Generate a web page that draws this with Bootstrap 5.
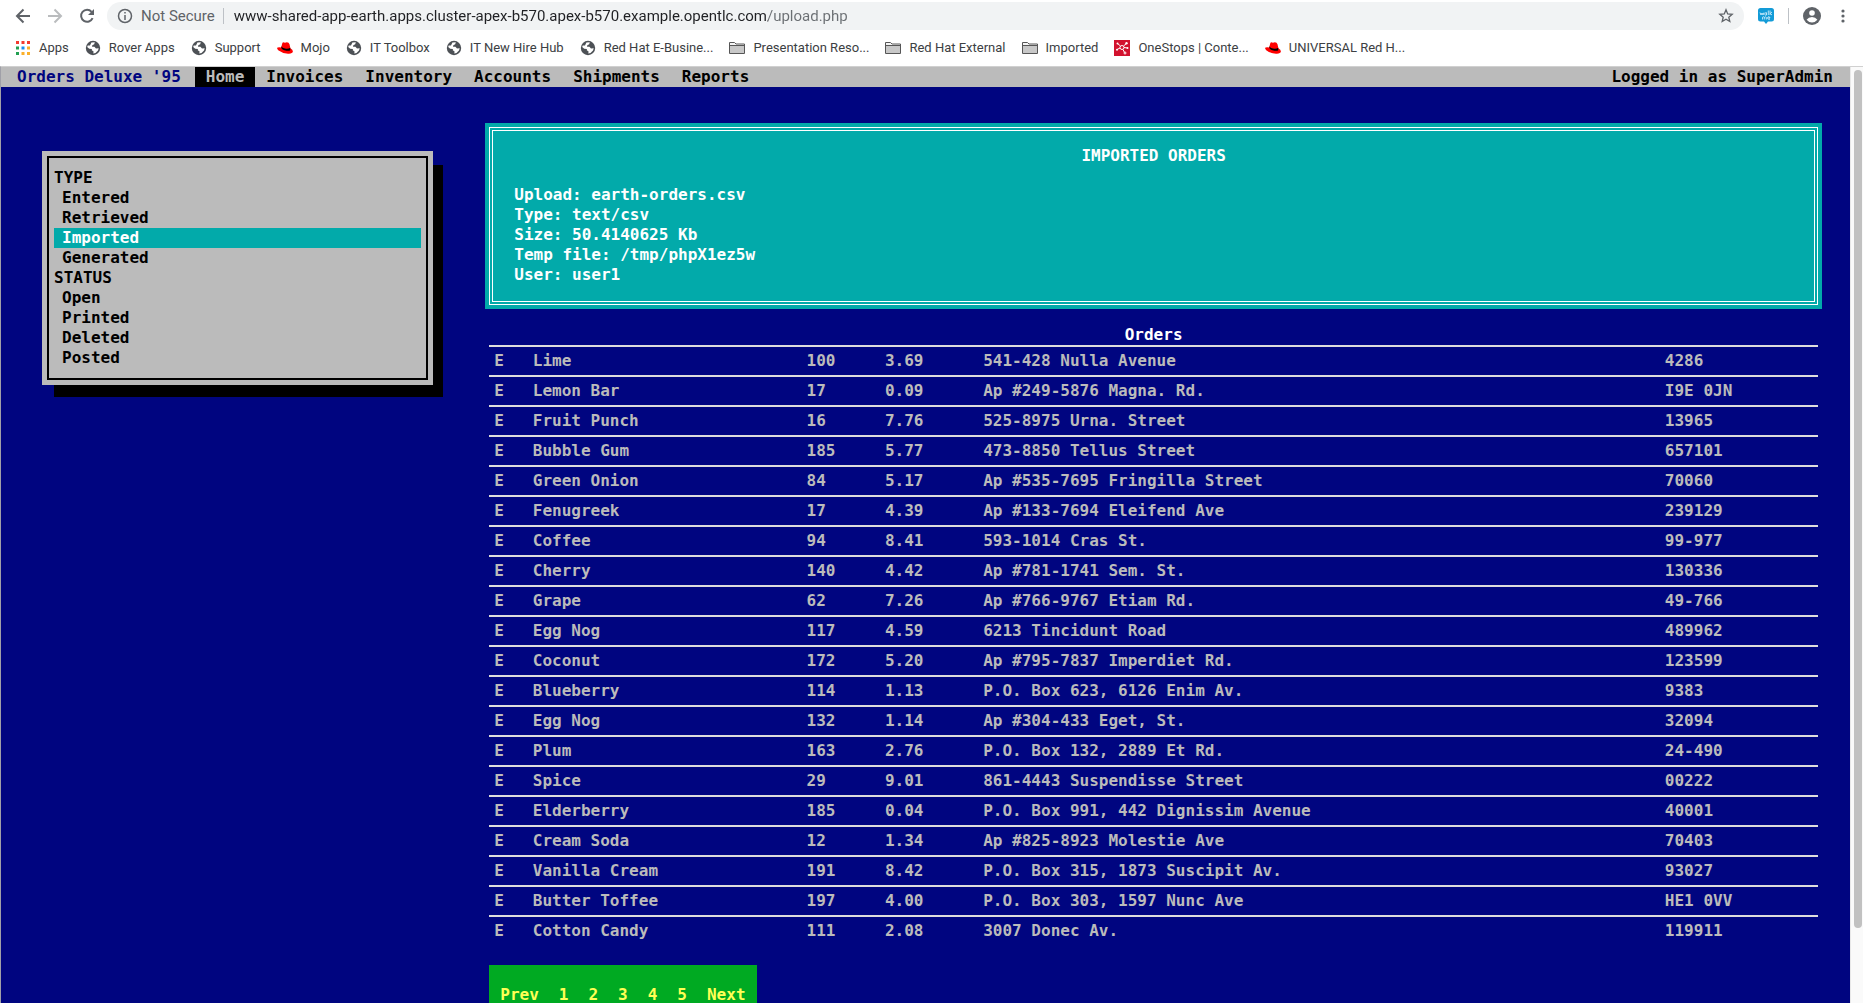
<!DOCTYPE html>
<html lang="en">
<head>
<meta charset="utf-8">
<meta name="viewport" content="width=device-width, initial-scale=1">
<title>Orders Deluxe '95</title>
<link href="https://cdn.jsdelivr.net/npm/bootstrap@5.3.0/dist/css/bootstrap.min.css" rel="stylesheet">
<style>
:root { --navy:#000580; --silver:#bbbbbb; --teal:#02aaaa; --chrome:#5f6368; }
body { font-family: Roboto, "Liberation Sans", sans-serif; background:#fff; }
button.tool { border:0; background:none; padding:0; display:flex; color:var(--chrome); }
.toolbar { height:32px; padding:2px 12px 2px 13px; }
.nav-tools { gap:12px; margin-right:10px; }
.ext-tools { gap:14px; margin-left:14px; }
.omnibox { height:28px; border-radius:14px; background:#f1f3f4; padding:0 10px 0 10px; }
.secure { font-size:15px; line-height:20px; color:var(--chrome); padding:0 8px 0 8px; }
.rule { width:1px; height:16px; background:#bdc1c6; }
.address { border:0; outline:0; padding:0 0 0 10px; font-size:15px; line-height:20px; color:#202124;
  background:linear-gradient(90deg,#202124 544px,#6b6f73 544px); -webkit-background-clip:text; background-clip:text; -webkit-text-fill-color:transparent; }
.bookmarks { height:32px; padding:0 15px; gap:16px; margin-bottom:2px; }
.bookmarks a { display:flex; align-items:center; gap:8px; color:#3c4043; font-size:13px; line-height:18px; text-decoration:none; white-space:nowrap; }
.viewport-area { border-top:1px solid #d0d0d0; border-left:1px solid #a0a0a8; min-height:0; }
.app { background:var(--navy); color:var(--silver); font:bold 16px/20px "DejaVu Sans Mono","Liberation Mono",monospace; min-width:0; }
.menubar { background:var(--silver); color:#000; padding:0 17px 0 16px; }
.menubar a { color:#000; text-decoration:none; padding:0 11px; }
.menubar a.title-link { color:var(--navy); padding:0 14px 0 0; }
.menubar a.active { background:#000; color:var(--silver); }
.side { padding:64px 30px 0 41px; }
.main { padding:36px 28px 0 22px; }
.panel { background:var(--silver); color:#000; padding:5px; box-shadow:11px 13px 0 -1px #000; }
.panel-frame { border:2px solid #000; padding:10px 5px; }
.panel a { display:block; color:#000; text-decoration:none; padding-left:8px; }
.panel a.active { background:var(--teal); color:#fff; }
.panel h2, .notice h1 { font:inherit; margin:0; }
.notice { background:var(--teal); color:#fff; padding:4px; }
.notice-frame { border:4px double #fff; padding:15px 21px 16px; }
.notice h1 { padding-bottom:19px; }
.orders { margin:15px 4px 20px; }
.orders table { width:100%; table-layout:fixed; border-collapse:separate; border-spacing:0; }
.orders caption { color:#fff; padding:1px 0 0; text-align:center; }
.orders td { border-top:2px solid #ddd; padding:4px 5px; white-space:nowrap; height:30px; }
.pages { background:#00aa22; padding:20px 1px; margin-left:4px; }
.pages a { color:#ffff55; text-decoration:none; padding:0 10px; }
.scroll-track { flex:0 0 13px; background:#fafafa; border-left:1px solid #e8e8e8; padding:3px 1px 0 3px; }
.scroll-thumb { height:92%; border-radius:4px; background:#c1c1c1; }
</style>
<script src="https://cdn.jsdelivr.net/npm/bootstrap@5.3.0/dist/js/bootstrap.bundle.min.js"></script>
</head>
<body class="vh-100 d-flex flex-column overflow-hidden">
<svg class="d-none">
  <symbol id="globe" viewBox="0 0 16 16"><circle cx="8" cy="8" r="7.2" fill="#4d5156"/><path d="M6.4 2.6 9.8 2.3 9.2 4.3 7.3 5.2 7 6.8H9.4L11 8.4 13.7 8.2 13 10.6 10.5 13 8.3 13.6 8.6 11.4 6.8 10.3 6.9 8.9 4.2 8.7 2.2 7 2.7 5.5 5 5.4Z" fill="#fff"/><path d="M10.8 3.3 13 5.8 11.2 6.8 9.8 5.5Z" fill="#4d5156"/></symbol>
  <symbol id="hat" viewBox="0 0 16 16"><path d="M4.2 7.5 5.2 3.4Q5.7 2 7 2.4L8 2.7Q11.600 1.600 12.500 4.200L13.400 8.300Q16 9.600 15.900 11.600 15.400 14 11 13.700 5 13.300 1.200 10.300-.7 8.200.7 7.500 2 6.900 4.200 7.500Z" fill="#f00"/><path d="M4.300 7.200Q4.200 9.300 7.500 10.300 12.500 11.600 13.300 9.900L13.200 7.700Q11.500 9.400 8 8.600 5 7.900 4.500 6.300Z" fill="#000"/></symbol>
  <symbol id="folder" viewBox="0 0 16 16"><path d="M.5 4V2.500H5.500L7 4H15.500V13.500H.5Z" fill="#f5f5f5" stroke="#565656"/><path d="M1 6H15V13H1Z" fill="#c8c8c8"/><path d="M.5 5.500H15.500" stroke="#565656"/></symbol>
</svg>

<header>
  <div class="toolbar d-flex align-items-center">
    <div class="nav-tools d-flex">
      <button class="tool" aria-label="Back"><svg width="20" height="20" viewBox="0 0 20 20" fill="none" stroke="currentColor" stroke-width="2"><path d="M17 10H4.500M10.500 3.500 4 10l6.500 6.500"/></svg></button>
      <button class="tool" aria-label="Forward"><svg width="20" height="20" viewBox="0 0 20 20" fill="none" stroke="#babcbe" stroke-width="2"><path d="M3 10h12.500M9.500 3.500 16 10l-6.500 6.500"/></svg></button>
      <button class="tool" aria-label="Reload"><svg width="20" height="20" viewBox="0 0 20 20"><path d="M15.600 12.200A6 6 0 1 1 14.600 5.800" fill="none" stroke="currentColor" stroke-width="2"/><path d="M17 3V9H11Z" fill="currentColor"/></svg></button>
    </div>
    <div class="omnibox d-flex align-items-center flex-grow-1">
      <svg width="16" height="16" viewBox="0 0 16 16" fill="none" stroke="#5f6368" stroke-width="1.500"><circle cx="8" cy="8" r="6.500"/><path d="M8 7V12M8 4V5.600"/></svg>
      <label class="secure text-nowrap" for="address">Not Secure</label>
      <span class="rule"></span>
      <input class="address flex-grow-1" id="address" type="text" value="www-shared-app-earth.apps.cluster-apex-b570.apex-b570.example.opentlc.com/upload.php">
      <button class="tool" aria-label="Bookmark"><svg width="16" height="16" viewBox="0 0 16 16" fill="none" stroke="#5f6368" stroke-width="1.300"><path d="m8 1.800 1.700 4.100 4.500.4-3.400 2.900 1 4.300L8 11.200 4.200 13.500l1-4.300L1.800 6.300l4.500-.4Z"/></svg></button>
    </div>
    <div class="ext-tools d-flex align-items-center">
      <button class="tool" aria-label="WalkMe"><svg width="16" height="16" viewBox="0 0 16 16"><path d="M2.500 0H13.500Q16 0 16 2.500V11Q16 13.500 13.500 13.500H10L8 16 6 13.500H2.500Q0 13.500 0 11V2.500Q0 0 2.500 0Z" fill="#139bd7"/><path d="M2 4.500 3 7 4 5 5 7 6 4.500M8.500 5A1.200 1.200 0 1 0 8.500 7V4.500M10.300 2.500V7M12 2.500V7M14 4 12.200 5.500 14 7M4.500 11.500V9.300Q6 8 6.300 9.500V11.500M6.300 9.500Q7.800 8 8.300 9.500V11.500M9.600 10H12Q11.700 8.500 10.500 8.700 9.500 9 9.700 10.500 10.200 11.800 12 11.200" fill="none" stroke="#e3f5ff" stroke-width=".8"/></svg></button>
      <span class="rule"></span>
      <button class="tool" aria-label="Profile"><svg width="18" height="18" viewBox="0 0 18 18"><circle cx="9" cy="9" r="9" fill="#5f6368"/><circle cx="9" cy="6" r="2.800" fill="#fff"/><path d="M3.600 12.700Q5.500 10 9 10T14.400 12.700Q12.300 15.400 9 15.400T3.600 12.700Z" fill="#fff"/></svg></button>
      <button class="tool" aria-label="Menu"><svg width="16" height="16" viewBox="0 0 16 16" fill="#5f6368"><circle cx="8" cy="3" r="1.600"/><circle cx="8" cy="8" r="1.600"/><circle cx="8" cy="13" r="1.600"/></svg></button>
    </div>
  </div>
  <nav class="bookmarks d-flex align-items-center" aria-label="Bookmarks">
    <a href="#"><svg width="16" height="16" viewBox="0 0 16 16"><path d="M1 1h3v3H1zM6.500 1h3v3h-3zM12 1h3v3h-3z" fill="#f33a30"/><path d="M1 6.500h3v3H1zM1 12h3v3H1z" fill="#22a052"/><path d="M6.500 6.500h3v3h-3z" fill="#1a8cf0"/><path d="M12 6.500h3v3h-3zM6.500 12h3v3h-3zM12 12h3v3h-3z" fill="#fbb02a"/></svg>Apps</a>
    <a href="#"><svg width="16" height="16"><use href="#globe"/></svg>Rover Apps</a>
    <a href="#"><svg width="16" height="16"><use href="#globe"/></svg>Support</a>
    <a href="#"><svg width="16" height="16"><use href="#hat"/></svg>Mojo</a>
    <a href="#"><svg width="16" height="16"><use href="#globe"/></svg>IT Toolbox</a>
    <a href="#"><svg width="16" height="16"><use href="#globe"/></svg>IT New Hire Hub</a>
    <a href="#"><svg width="16" height="16"><use href="#globe"/></svg>Red Hat E-Busine...</a>
    <a href="#"><svg width="16" height="16"><use href="#folder"/></svg>Presentation Reso...</a>
    <a href="#"><svg width="16" height="16"><use href="#folder"/></svg>Red Hat External</a>
    <a href="#"><svg width="16" height="16"><use href="#folder"/></svg>Imported</a>
    <a href="#"><svg width="16" height="16" viewBox="0 0 16 16"><path d="M0 0H16V16H0Z" fill="#d2122e"/><g fill="none" stroke="#fff"><circle cx="8" cy="7.500" r="2"/><path d="M6.500 6 3.500 3.500M9.500 6 12.500 3.500M6 8 3 9.500M9 9.500 10.500 12.500M10 7.500 13.500 8"/><circle cx="11" cy="13" r="1"/></g><g fill="#fff"><circle cx="3.500" cy="3.500" r="1"/><circle cx="12.500" cy="3.300" r="1.200"/><circle cx="3" cy="9.700" r="1"/><circle cx="13.500" cy="8" r="1"/></g></svg>OneStops | Conte...</a>
    <a href="#"><svg width="16" height="16"><use href="#hat"/></svg>UNIVERSAL Red H...</a>
  </nav>
</header>

<div class="viewport-area d-flex flex-grow-1">
  <div class="app flex-grow-1 overflow-hidden">
    <nav class="menubar d-flex">
      <a class="title-link" href="#">Orders Deluxe '95</a>
      <a class="active" href="#">Home</a>
      <a href="#">Invoices</a>
      <a href="#">Inventory</a>
      <a href="#">Accounts</a>
      <a href="#">Shipments</a>
      <a href="#">Reports</a>
      <span class="ms-auto">Logged in as SuperAdmin</span>
    </nav>
    <div class="row g-0">
      <aside class="side col-3">
        <div class="panel"><div class="panel-frame">
          <h2>TYPE</h2>
          <a href="#">Entered</a>
          <a href="#">Retrieved</a>
          <a class="active" href="#">Imported</a>
          <a href="#">Generated</a>
          <h2>STATUS</h2>
          <a href="#">Open</a>
          <a href="#">Printed</a>
          <a href="#">Deleted</a>
          <a href="#">Posted</a>
        </div></div>
      </aside>
      <main class="main col-9">
        <section class="notice"><div class="notice-frame">
          <h1 class="text-center">IMPORTED ORDERS</h1>
          <div>Upload: earth-orders.csv</div>
          <div>Type: text/csv</div>
          <div>Size: 50.4140625 Kb</div>
          <div>Temp file: /tmp/phpX1ez5w</div>
          <div>User: user1</div>
        </div></section>
        <section class="orders">
          <table class="caption-top">
            <caption>Orders</caption>
            <colgroup><col style="width:2.9%"><col style="width:20.6%"><col style="width:5.9%"><col style="width:7.4%"><col style="width:51.3%"><col></colgroup>
            <tbody>
              <tr><td>E</td><td>Lime</td><td>100</td><td>3.69</td><td>541-428 Nulla Avenue</td><td>4286</td></tr>
              <tr><td>E</td><td>Lemon Bar</td><td>17</td><td>0.09</td><td>Ap #249-5876 Magna. Rd.</td><td>I9E 0JN</td></tr>
              <tr><td>E</td><td>Fruit Punch</td><td>16</td><td>7.76</td><td>525-8975 Urna. Street</td><td>13965</td></tr>
              <tr><td>E</td><td>Bubble Gum</td><td>185</td><td>5.77</td><td>473-8850 Tellus Street</td><td>657101</td></tr>
              <tr><td>E</td><td>Green Onion</td><td>84</td><td>5.17</td><td>Ap #535-7695 Fringilla Street</td><td>70060</td></tr>
              <tr><td>E</td><td>Fenugreek</td><td>17</td><td>4.39</td><td>Ap #133-7694 Eleifend Ave</td><td>239129</td></tr>
              <tr><td>E</td><td>Coffee</td><td>94</td><td>8.41</td><td>593-1014 Cras St.</td><td>99-977</td></tr>
              <tr><td>E</td><td>Cherry</td><td>140</td><td>4.42</td><td>Ap #781-1741 Sem. St.</td><td>130336</td></tr>
              <tr><td>E</td><td>Grape</td><td>62</td><td>7.26</td><td>Ap #766-9767 Etiam Rd.</td><td>49-766</td></tr>
              <tr><td>E</td><td>Egg Nog</td><td>117</td><td>4.59</td><td>6213 Tincidunt Road</td><td>489962</td></tr>
              <tr><td>E</td><td>Coconut</td><td>172</td><td>5.20</td><td>Ap #795-7837 Imperdiet Rd.</td><td>123599</td></tr>
              <tr><td>E</td><td>Blueberry</td><td>114</td><td>1.13</td><td>P.O. Box 623, 6126 Enim Av.</td><td>9383</td></tr>
              <tr><td>E</td><td>Egg Nog</td><td>132</td><td>1.14</td><td>Ap #304-433 Eget, St.</td><td>32094</td></tr>
              <tr><td>E</td><td>Plum</td><td>163</td><td>2.76</td><td>P.O. Box 132, 2889 Et Rd.</td><td>24-490</td></tr>
              <tr><td>E</td><td>Spice</td><td>29</td><td>9.01</td><td>861-4443 Suspendisse Street</td><td>00222</td></tr>
              <tr><td>E</td><td>Elderberry</td><td>185</td><td>0.04</td><td>P.O. Box 991, 442 Dignissim Avenue</td><td>40001</td></tr>
              <tr><td>E</td><td>Cream Soda</td><td>12</td><td>1.34</td><td>Ap #825-8923 Molestie Ave</td><td>70403</td></tr>
              <tr><td>E</td><td>Vanilla Cream</td><td>191</td><td>8.42</td><td>P.O. Box 315, 1873 Suscipit Av.</td><td>93027</td></tr>
              <tr><td>E</td><td>Butter Toffee</td><td>197</td><td>4.00</td><td>P.O. Box 303, 1597 Nunc Ave</td><td>HE1 0VV</td></tr>
              <tr><td>E</td><td>Cotton Candy</td><td>111</td><td>2.08</td><td>3007 Donec Av.</td><td>119911</td></tr>
            </tbody>
          </table>
        </section>
        <nav class="pages d-inline-flex" aria-label="Pages">
          <a href="#">Prev</a><a href="#">1</a><a href="#">2</a><a href="#">3</a><a href="#">4</a><a href="#">5</a><a href="#">Next</a>
        </nav>
      </main>
    </div>
  </div>
  <div class="scroll-track"><div class="scroll-thumb"></div></div>
</div>
</body>
</html>
